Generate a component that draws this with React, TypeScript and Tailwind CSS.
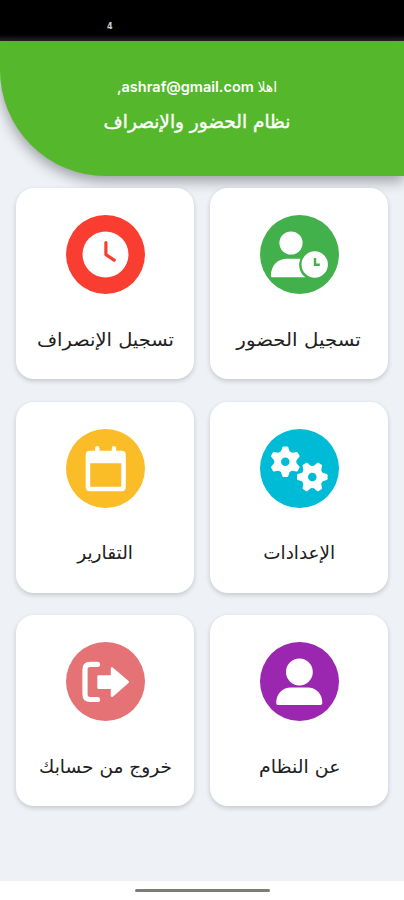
import { ReactNode } from "react";

interface MenuItem {
  label: string;
  color: string;
  textClass: string;
  icon: ReactNode;
}

const GearShape = ({ x, y, angle }: { x: number; y: number; angle: number }) => (
  <g transform={`translate(${x} ${y}) rotate(${angle})`}>
    <circle r="7.7" fill="none" stroke="white" strokeWidth="6.8" />
    {[0, 60, 120, 180, 240, 300].map((a) => (
      <path
        key={a}
        transform={`rotate(${a})`}
        d="M-4.6 -9.5L-2.9 -14.5Q-2.6 -15.3 -1.8 -15.3H1.8Q2.6 -15.3 2.9 -14.5L4.6 -9.5Z"
        fill="white"
      />
    ))}
  </g>
);

// cards are listed in reading order, right to left
const items: MenuItem[] = [
  {
    label: "تسجيل الحضور",
    color: "bg-[#42b04b]",
    textClass: "text-[18px] scale-x-[1.1]",
    icon: (
      <>
        <circle cx="31" cy="28" r="11.6" fill="white" />
        <path
          d="M12 62.3Q10.6 62.3 10.8 60.5C11.5 50 17.5 43.8 27 43.8H40.5A15 15 0 0 0 45.5 62.3Z"
          fill="white"
        />
        <circle cx="54.7" cy="49.5" r="13.2" fill="white" />
        <path d="M55 43V49.7H59.8" fill="none" stroke="#42b04b" strokeWidth="2.4" />
      </>
    ),
  },
  {
    label: "تسجيل الإنصراف",
    color: "bg-[#f93e31]",
    textClass: "text-[18px] scale-x-[1.08]",
    icon: (
      <>
        <circle cx="39.5" cy="39.5" r="23" fill="white" />
        <path
          d="M39.9 27.5V39.6L48.2 45.2"
          fill="none"
          stroke="#f93e31"
          strokeWidth="3.2"
          strokeLinecap="round"
          strokeLinejoin="round"
        />
      </>
    ),
  },
  {
    label: "الإعدادات",
    color: "bg-[#00bbd5]",
    textClass: "text-[18px] scale-x-[1.02] -mt-px",
    icon: (
      <>
        <GearShape x={25.3} y={32.7} angle={0} />
        <GearShape x={52.3} y={48} angle={30} />
      </>
    ),
  },
  {
    label: "التقارير",
    color: "bg-[#fabd27]",
    textClass: "text-[18px] scale-x-[1.03] -mt-px",
    icon: (
      <>
        <path
          d="M24 21.8H55.5Q59.8 21.8 59.8 26V58Q59.8 62.3 55.5 62.3H24Q19.7 62.3 19.7 58V26Q19.7 21.8 24 21.8ZM24.2 34.3V57.7H55.2V34.3Z"
          fill="white"
          fillRule="evenodd"
        />
        <path d="M31.3 19.2V24M48 19.2V24" stroke="white" strokeWidth="4.4" strokeLinecap="round" />
      </>
    ),
  },
  {
    label: "عن النظام",
    color: "bg-[#9b27b0]",
    textClass: "text-[18px] scale-x-[1.05] pl-px",
    icon: (
      <>
        <circle cx="39.4" cy="30" r="13.4" fill="white" />
        <path
          d="M31 45.5H47.5C56 45.5 62.3 51.5 62.3 61Q62.3 63 60.5 63H18Q16.2 63 16.2 61C16.2 51.5 22.5 45.5 31 45.5Z"
          fill="white"
        />
      </>
    ),
  },
  {
    label: "خروج من حسابك",
    color: "bg-[#e57274]",
    textClass: "text-[18px] scale-x-[1.03] pl-px",
    icon: (
      <>
        <path
          d="M31.5 22.3H24Q19 22.3 19 27.5V52.3Q19 57.5 24 57.5H31.5"
          fill="none"
          stroke="white"
          strokeWidth="5.2"
          strokeLinecap="round"
        />
        <path
          d="M32.5 34.5H46V26.5L61.8 40L46 53.8V45.8H32.5Z"
          fill="white"
          stroke="white"
          strokeWidth="2.4"
          strokeLinejoin="round"
        />
      </>
    ),
  },
];

const MenuCard = ({ item }: { item: MenuItem }) => (
  <div className="flex h-[191px] flex-col items-center rounded-[18px] bg-white pt-[27px] shadow-[0_2px_5px_rgba(0,0,0,0.18)]">
    <div className={`mb-[30px] size-[79px] rounded-full ${item.color}`}>
      <svg viewBox="0 0 79 79" className="size-full">
        {item.icon}
      </svg>
    </div>
    <span
      className={`whitespace-nowrap leading-[32px] text-[#202020] ${item.textClass}`}
    >
      {item.label}
    </span>
  </div>
);

export default function App() {
  return (
    <div
      dir="rtl"
      className="flex h-[900px] w-[404px] flex-col overflow-hidden bg-[#eef2f7] font-['DejaVu_Sans',sans-serif]"
    >
      <div
        dir="ltr"
        className="h-[41px] shrink-0 bg-linear-to-b from-black from-75% to-[#262428] pl-[107px] pt-[21px] text-[8px] leading-[12px] font-bold text-[#d0d0d0]"
      >
        4
      </div>
      <div className="shrink-0 bg-[#eef2f7]">
        <header className="flex h-[135px] flex-col items-center rounded-bl-[106px] bg-[#55b72b] pt-[35px] pr-[10px] text-white shadow-[0_5px_14px_rgba(0,0,0,0.36)]">
          <p className="whitespace-nowrap font-['Inter','DejaVu_Sans',sans-serif] text-[14.5px] leading-[22px] font-semibold">
            <span className="text-[14px] font-medium">اهلا</span> ashraf@gmail.com,
          </p>
          <h1 className="mt-[8px] whitespace-nowrap text-[18.5px] leading-[32px] [-webkit-text-stroke:0.4px_white]">
            نظام الحضور والإنصراف
          </h1>
        </header>
      </div>
      <main className="grid grid-cols-2 gap-x-4 gap-y-[22.5px] px-4 pt-3">
        {items.map((item) => (
          <MenuCard key={item.label} item={item} />
        ))}
      </main>
      <footer className="mt-auto flex h-[19px] shrink-0 justify-center bg-white pt-[8px]">
        <div className="h-[3px] w-[135px] rounded-full bg-[#7c7d79]" />
      </footer>
    </div>
  );
}
